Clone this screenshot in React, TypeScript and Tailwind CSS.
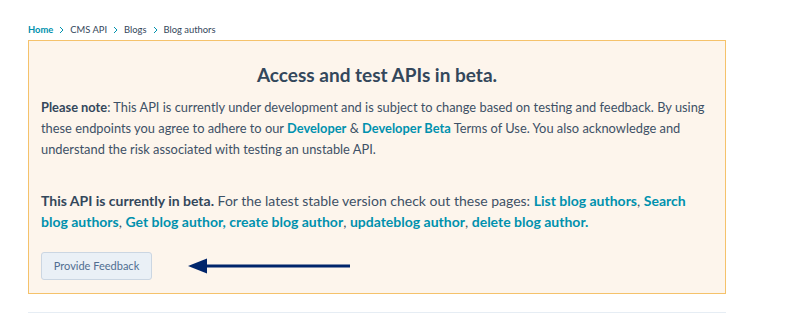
import React from "react";

const Chevron = () => (
  <svg width="5" height="8" viewBox="0 0 5 8" className="mx-[6px]" fill="none">
    <path d="M1 1 L4 4 L1 7" stroke="#0091ae" strokeWidth="1" />
  </svg>
);

export default function App() {
  return (
    <div
      className="w-[790px] h-[334px] bg-white pl-[28px] text-[#33475b]"
      style={{ fontFamily: "Lato, 'Open Sans', sans-serif" }}
    >
      <div className="pt-[22px] pb-[2px] flex items-center h-[40px] text-[9.4px] leading-[16px]">
        <span className="text-[#0091ae] font-bold">Home</span>
        <Chevron />
        <span>CMS API</span>
        <Chevron />
        <span>Blogs</span>
        <Chevron />
        <span>Blog authors</span>
      </div>
      <div className="w-[698px] border border-[#f5c26b] bg-[#fdf5ec] px-[12px] pt-[22px] pb-[13px]">
        <h2 className="text-center text-[19px] leading-[24px] font-bold text-[#33475b]">
          Access and test APIs in beta.
        </h2>
        <p className="mt-[10px] text-[12.85px] leading-[21px] text-[#3d5166]">
          <b className="text-[#33475b]">Please note</b>: This API is currently under development and is subject to change based on testing and feedback. By using these endpoints you agree to adhere to our{" "}
          <span className="text-[#0091ae] font-bold">Developer</span> &amp;{" "}
          <span className="text-[#0091ae] font-bold">Developer Beta</span> Terms of Use. You also acknowledge and understand the risk associated with testing an unstable API.
        </p>
        <p className="mt-[30px] text-[14px] leading-[21px] text-[#3d5166]">
          <b className="text-[#33475b]">This API is currently in beta.</b> For the latest stable version check out these pages:{" "}
          <span className="text-[#0091ae] font-bold">List blog authors</span>,{" "}
          <span className="text-[#0091ae] font-bold">Search blog authors</span>,{" "}
          <span className="text-[#0091ae] font-bold">Get blog author, create blog author</span>,{" "}
          <span className="text-[#0091ae] font-bold">updateblog author</span>,{" "}
          <span className="text-[#0091ae] font-bold">delete blog author.</span>
        </p>
        <div className="mt-[20px] flex items-center">
          <button className="h-[28px] w-[111px] rounded-[3px] border border-[#cbd6e2] bg-[#eaf0f6] text-[11px] text-[#506e91]">
            Provide Feedback
          </button>
          <svg width="164" height="16" viewBox="0 0 164 16" className="ml-[36px]">
            <path d="M0 8 L19 0.5 L19 15.5 Z" fill="#00256b" />
            <rect x="17" y="6.5" width="145" height="3" fill="#00256b" />
          </svg>
        </div>
      </div>
      <div className="mt-[18px] w-[698px] h-[1px] bg-[#e6edf4]" />
    </div>
  );
}
